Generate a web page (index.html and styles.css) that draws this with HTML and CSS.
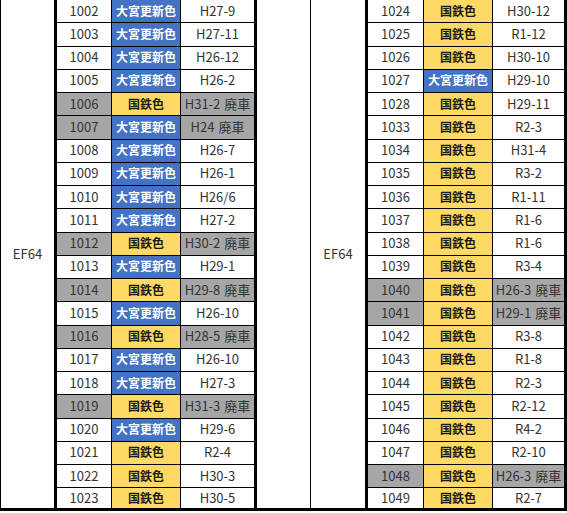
FILE: index.html
```html
<!DOCTYPE html>
<html lang="ja">
<head>
<meta charset="utf-8">
<link rel="stylesheet" href="styles.css">
</head>
<body>
<table class="sheet">
<colgroup>
<col class="c-a"><col class="c-b"><col class="c-c"><col class="c-d"><col class="c-e"><col class="c-f"><col class="c-g"><col class="c-h"><col class="c-i">
</colgroup>
<tbody>
<tr><td class="label first" rowspan="22">EF64</td><td class="num">1002</td><td class="blue">大宮更新色</td><td class="date end">H27-9</td><td class="gap" rowspan="22"></td><td class="label" rowspan="22">EF64</td><td class="num">1024</td><td class="yellow">国鉄色</td><td class="date end">H30-12</td></tr>
<tr><td class="num">1003</td><td class="blue">大宮更新色</td><td class="date end">H27-11</td><td class="num">1025</td><td class="yellow">国鉄色</td><td class="date end">R1-12</td></tr>
<tr><td class="num">1004</td><td class="blue">大宮更新色</td><td class="date end">H26-12</td><td class="num">1026</td><td class="yellow">国鉄色</td><td class="date end">H30-10</td></tr>
<tr><td class="num">1005</td><td class="blue">大宮更新色</td><td class="date end">H26-2</td><td class="num">1027</td><td class="blue">大宮更新色</td><td class="date end">H29-10</td></tr>
<tr><td class="num gray">1006</td><td class="yellow">国鉄色</td><td class="date end gray">H31-2 廃車</td><td class="num">1028</td><td class="yellow">国鉄色</td><td class="date end">H29-11</td></tr>
<tr><td class="num gray">1007</td><td class="blue">大宮更新色</td><td class="date end gray">H24 廃車</td><td class="num">1033</td><td class="yellow">国鉄色</td><td class="date end">R2-3</td></tr>
<tr><td class="num">1008</td><td class="blue">大宮更新色</td><td class="date end">H26-7</td><td class="num">1034</td><td class="yellow">国鉄色</td><td class="date end">H31-4</td></tr>
<tr><td class="num">1009</td><td class="blue">大宮更新色</td><td class="date end">H26-1</td><td class="num">1035</td><td class="yellow">国鉄色</td><td class="date end">R3-2</td></tr>
<tr><td class="num">1010</td><td class="blue">大宮更新色</td><td class="date end">H26/6</td><td class="num">1036</td><td class="yellow">国鉄色</td><td class="date end">R1-11</td></tr>
<tr><td class="num">1011</td><td class="blue">大宮更新色</td><td class="date end">H27-2</td><td class="num">1037</td><td class="yellow">国鉄色</td><td class="date end">R1-6</td></tr>
<tr><td class="num gray">1012</td><td class="yellow">国鉄色</td><td class="date end gray">H30-2 廃車</td><td class="num">1038</td><td class="yellow">国鉄色</td><td class="date end">R1-6</td></tr>
<tr><td class="num">1013</td><td class="blue">大宮更新色</td><td class="date end">H29-1</td><td class="num">1039</td><td class="yellow">国鉄色</td><td class="date end">R3-4</td></tr>
<tr><td class="num gray">1014</td><td class="yellow">国鉄色</td><td class="date end gray">H29-8 廃車</td><td class="num gray">1040</td><td class="yellow">国鉄色</td><td class="date end gray">H26-3 廃車</td></tr>
<tr><td class="num">1015</td><td class="blue">大宮更新色</td><td class="date end">H26-10</td><td class="num gray">1041</td><td class="yellow">国鉄色</td><td class="date end gray">H29-1 廃車</td></tr>
<tr><td class="num gray">1016</td><td class="yellow">国鉄色</td><td class="date end gray">H28-5 廃車</td><td class="num">1042</td><td class="yellow">国鉄色</td><td class="date end">R3-8</td></tr>
<tr><td class="num">1017</td><td class="blue">大宮更新色</td><td class="date end">H26-10</td><td class="num">1043</td><td class="yellow">国鉄色</td><td class="date end">R1-8</td></tr>
<tr><td class="num">1018</td><td class="blue">大宮更新色</td><td class="date end">H27-3</td><td class="num">1044</td><td class="yellow">国鉄色</td><td class="date end">R2-3</td></tr>
<tr><td class="num gray">1019</td><td class="yellow">国鉄色</td><td class="date end gray">H31-3 廃車</td><td class="num">1045</td><td class="yellow">国鉄色</td><td class="date end">R2-12</td></tr>
<tr><td class="num">1020</td><td class="blue">大宮更新色</td><td class="date end">H29-6</td><td class="num">1046</td><td class="yellow">国鉄色</td><td class="date end">R4-2</td></tr>
<tr><td class="num">1021</td><td class="yellow">国鉄色</td><td class="date end">R2-4</td><td class="num">1047</td><td class="yellow">国鉄色</td><td class="date end">R2-10</td></tr>
<tr><td class="num">1022</td><td class="yellow">国鉄色</td><td class="date end">H30-3</td><td class="num gray">1048</td><td class="yellow">国鉄色</td><td class="date end gray">H26-3 廃車</td></tr>
<tr class="last"><td class="num">1023</td><td class="yellow">国鉄色</td><td class="date end">H30-5</td><td class="num">1049</td><td class="yellow">国鉄色</td><td class="date end">R2-7</td></tr>
</tbody>
</table>
</body>
</html>
```

FILE: styles.css
```css
html, body {
  margin: 0;
  padding: 0;
  background: #ffffff;
}

.sheet {
  border-collapse: separate;
  border-spacing: 0;
  table-layout: fixed;
  width: 567px;
  font-family: "Noto Sans CJK JP", "Noto Sans", sans-serif;
  font-size: 12px;
  color: #333333;
}

.c-a { width: 57px; }
.c-b { width: 55px; }
.c-c { width: 69px; }
.c-d { width: 76px; }
.c-e { width: 54px; }
.c-f { width: 57px; }
.c-g { width: 56px; }
.c-h { width: 69px; }
.c-i { width: 74px; }

.sheet td {
  box-sizing: border-box;
  height: 23.25px;
  padding: 0 0 1px 0;
  text-align: center;
  vertical-align: middle;
  line-height: 14px;
  white-space: nowrap;
  border-right: 1px solid #000;
  border-bottom: 1px solid #000;
  overflow: hidden;
}

.sheet td.first {
  border-left: 1px solid #000;
}

.sheet td.label,
.sheet td.end {
  border-right: 3px solid #000;
}

.sheet td.label,
.sheet td.gap {
  border-bottom: 3px solid #000;
  font-size: 13px;
}

.sheet tr.last td {
  height: 23px;
  border-bottom: 3px solid #000;
}

.num {
  font-size: 13px;
}

.date {
  font-size: 13px;
  word-spacing: 1px;
}

.blue {
  background: #4472c4;
  color: #ffffff;
  font-weight: 700;
}

.yellow {
  background: #ffd966;
  color: #1a1a1a;
  font-weight: 700;
}

.gray {
  background: #a6a6a6;
}
```
